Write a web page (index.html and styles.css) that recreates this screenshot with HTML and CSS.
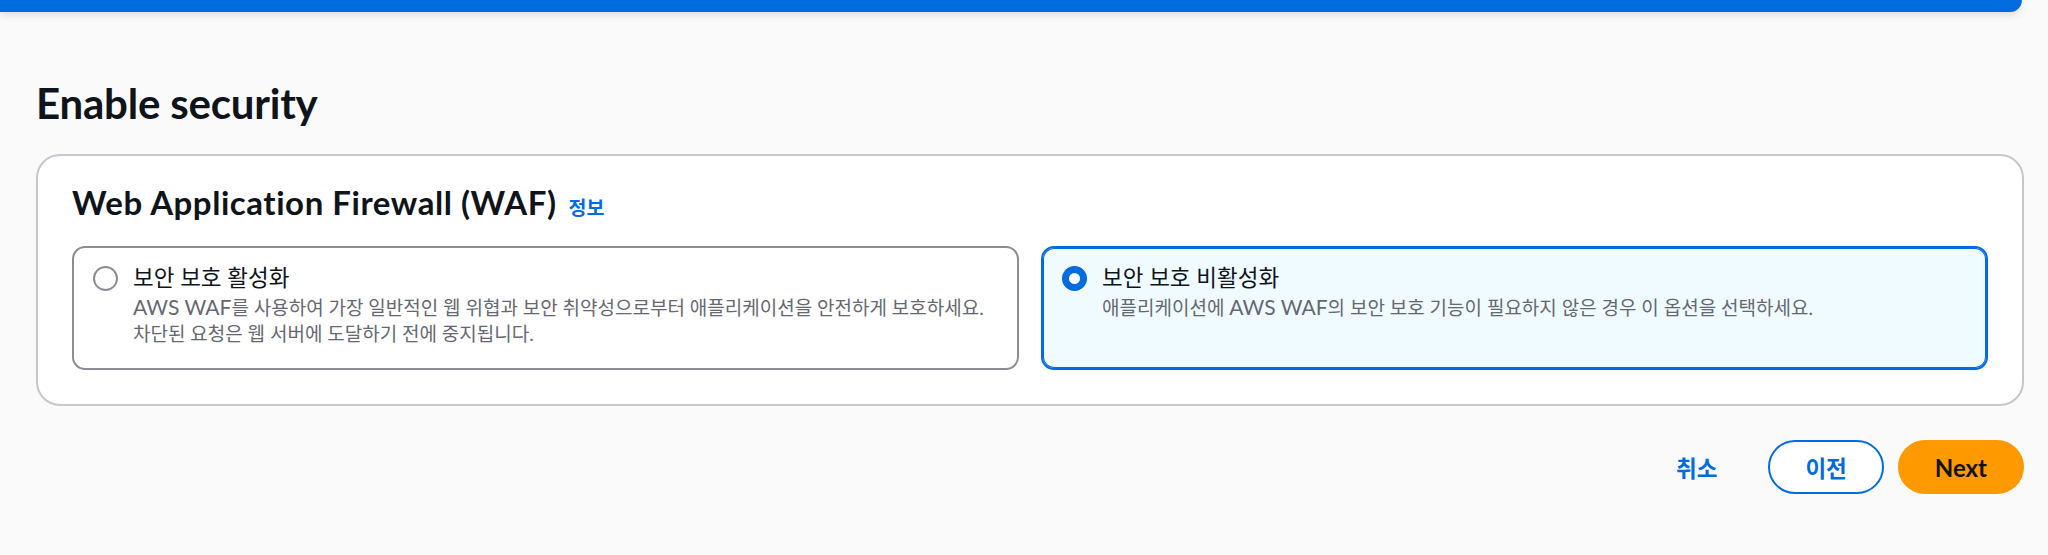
FILE: index.html
```html
<!DOCTYPE html>
<html lang="ko">
<head>
<meta charset="utf-8">
<title>Enable security</title>
<link rel="stylesheet" href="styles.css">
</head>
<body>
<div class="topbar"></div>
<main class="page">
  <h1 class="page-title">Enable security</h1>
  <section class="container">
    <h2 class="container-title"><span>Web Application Firewall (WAF)</span><a class="info-link" href="#">정보</a></h2>
    <div class="tiles">
      <label class="tile">
        <span class="radio"></span>
        <span class="tile-text">
          <span class="tile-label">보안 보호 활성화</span>
          <span class="tile-desc"><span class="en">AWS WAF</span>를 사용하여 가장 일반적인 웹 위협과 보안 취약성으로부터 애플리케이션을 안전하게 보호하세요. 차단된 요청은 웹 서버에 도달하기 전에 중지됩니다.</span>
        </span>
      </label>
      <label class="tile selected">
        <span class="radio checked"></span>
        <span class="tile-text">
          <span class="tile-label">보안 보호 비활성화</span>
          <span class="tile-desc">애플리케이션에 <span class="en">AWS WAF</span>의 보안 보호 기능이 필요하지 않은 경우 이 옵션을 선택하세요.</span>
        </span>
      </label>
    </div>
  </section>
  <div class="actions">
    <button class="btn btn-link">취소</button>
    <button class="btn btn-normal">이전</button>
    <button class="btn btn-primary">Next</button>
  </div>
</main>
</body>
</html>
```
FILE: styles.css
```css
body {
  margin: 0;
  background: #fafafa;
  font-family: Lato, "Noto Sans CJK KR", sans-serif;
  color: #0f141a;
}

.topbar {
  height: 12px;
  margin-right: 26px;
  background: #006ce0;
  border-bottom-right-radius: 14px;
  box-shadow: 0 3px 8px rgba(0, 7, 22, 0.12);
}

.page {
  padding: 66px 24px 0 36px;
}

.page-title {
  margin: 0;
  font-size: 42px;
  line-height: 50px;
  font-weight: 700;
  letter-spacing: -0.2px;
}

.container {
  margin-top: 26px;
  background: #fff;
  border: 2px solid #c6c6cd;
  border-radius: 24px;
  padding: 26px 34px 34px;
}

.container-title {
  margin: 0 0 19px;
  font-size: 33px;
  line-height: 40px;
  font-weight: 700;
  letter-spacing: 0.55px;
  display: flex;
  align-items: baseline;
  gap: 12px;
}

.info-link {
  font-family: "Noto Sans CJK KR", sans-serif;
  font-size: 19.5px;
  font-weight: 700;
  letter-spacing: 0;
  color: #006ce0;
  text-decoration: none;
}

.tiles {
  display: grid;
  grid-template-columns: 1fr 1fr;
  gap: 22px;
}

.tile {
  display: flex;
  gap: 15px;
  padding: 14px 21px 21px 19px;
  border: 2px solid #8c8c94;
  border-radius: 13px;
  background: #fff;
}

.tile.selected {
  border-color: #006ce0;
  box-shadow: inset 0 0 0 1px #006ce0;
  background: #f0fbff;
}

.radio {
  flex: none;
  width: 25px;
  height: 25px;
  margin-top: 4px;
  box-sizing: border-box;
  border: 2px solid #8c8c94;
  border-radius: 50%;
  background: #fff;
}

.radio.checked {
  border: 7.5px solid #006ce0;
}

.tile-label {
  display: block;
  font-size: 22.5px;
  line-height: 32px;
}

.tile-desc {
  display: block;
  font-size: 19px;
  line-height: 26px;
  color: #656871;
}

.en {
  font-size: 21px;
}

.actions {
  display: flex;
  justify-content: flex-end;
  gap: 14px;
  margin-top: 34px;
}

.btn {
  height: 54px;
  padding: 0 35px;
  border: 2px solid transparent;
  border-radius: 27px;
  background: none;
  font-family: Lato, "Noto Sans CJK KR", sans-serif;
  font-size: 22.5px;
  font-weight: 700;
  color: #006ce0;
}

.btn-normal {
  border-color: #006ce0;
  background: #fff;
}

.btn-primary {
  border-color: #ff9900;
  background: #ff9900;
  color: #0f141a;
  font-size: 24px;
}
```
